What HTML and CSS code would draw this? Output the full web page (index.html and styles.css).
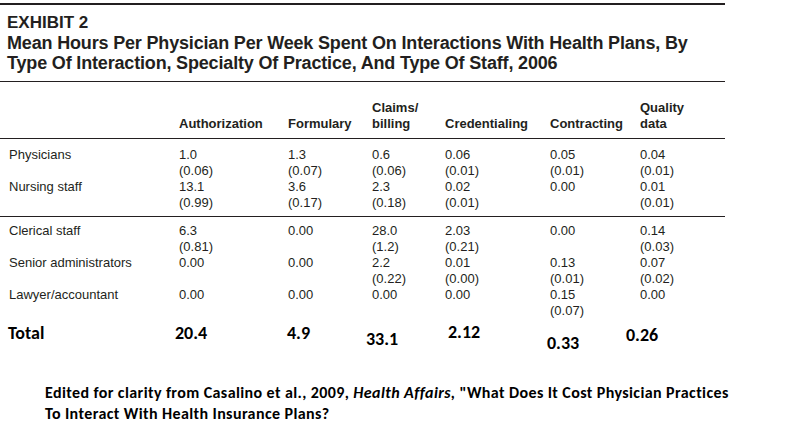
FILE: index.html
```html
<!DOCTYPE html>
<html lang="en">
<head>
<meta charset="utf-8">
<title>Exhibit 2</title>
<link rel="stylesheet" href="styles.css">
</head>
<body>
<div class="page">
  <section class="exhibit">
    <header class="exhibit-head">
      <div class="exhibit-label">EXHIBIT 2</div>
      <h1 class="exhibit-title">Mean Hours Per Physician Per Week Spent On Interactions With Health Plans, By<br>Type Of Interaction, Specialty Of Practice, And Type Of Staff, 2006</h1>
    </header>

    <div class="grid head-row">
      <div></div>
      <div>Authorization</div>
      <div>Formulary</div>
      <div>Claims/<br>billing</div>
      <div>Credentialing</div>
      <div>Contracting</div>
      <div>Quality<br>data</div>
    </div>

    <div class="grid group group-first">
      <div>Physicians</div>
      <div>1.0<br>(0.06)</div>
      <div>1.3<br>(0.07)</div>
      <div>0.6<br>(0.06)</div>
      <div>0.06<br>(0.01)</div>
      <div>0.05<br>(0.01)</div>
      <div>0.04<br>(0.01)</div>

      <div>Nursing staff</div>
      <div>13.1<br>(0.99)</div>
      <div>3.6<br>(0.17)</div>
      <div>2.3<br>(0.18)</div>
      <div>0.02<br>(0.01)</div>
      <div>0.00</div>
      <div>0.01<br>(0.01)</div>
    </div>

    <div class="grid group group-second">
      <div>Clerical staff</div>
      <div>6.3<br>(0.81)</div>
      <div>0.00</div>
      <div>28.0<br>(1.2)</div>
      <div>2.03<br>(0.21)</div>
      <div>0.00</div>
      <div>0.14<br>(0.03)</div>

      <div>Senior administrators</div>
      <div>0.00</div>
      <div>0.00</div>
      <div>2.2<br>(0.22)</div>
      <div>0.01<br>(0.00)</div>
      <div>0.13<br>(0.01)</div>
      <div>0.07<br>(0.02)</div>

      <div>Lawyer/accountant</div>
      <div>0.00</div>
      <div>0.00</div>
      <div>0.00</div>
      <div>0.00</div>
      <div>0.15<br>(0.07)</div>
      <div>0.00</div>
    </div>
  </section>

  <div class="grid total-row">
    <div class="t-label">Total</div>
    <div class="t-auth">20.4</div>
    <div class="t-form">4.9</div>
    <div class="t-claims">33.1</div>
    <div class="t-cred">2.12</div>
    <div class="t-contr">0.33</div>
    <div class="t-qual">0.26</div>
  </div>

  <p class="source">Edited for clarity from Casalino et al., 2009, <em>Health Affairs,</em> "What Does It Cost Physician Practices<br>To Interact With Health Insurance Plans?</p>
</div>
</body>
</html>
```

FILE: styles.css
```css
* {
  box-sizing: border-box;
}

html, body {
  margin: 0;
  padding: 0;
  background: #ffffff;
}

.page {
  width: 789px;
  height: 442px;
  padding-top: 3px;
  color: #231f20;
  font-family: "Liberation Sans", Arial, sans-serif;
}

.exhibit {
  width: 725px;
  border-top: 2px solid #231f20;
}

.exhibit-head {
  padding: 8px 0 8px 7px;
  border-bottom: 1px solid #231f20;
}

.exhibit-label,
.exhibit-title {
  margin: 0;
  font-size: 17px;
  line-height: 20px;
  font-weight: 700;
}

.exhibit-title {
  font-size: 18px;
  letter-spacing: -0.17px;
}

.grid {
  display: grid;
  grid-template-columns: 170px 109px 84px 73px 105px 90px 85px;
  padding-left: 9px;
}

.head-row {
  padding-top: 18px;
  padding-bottom: 6px;
  font-size: 13px;
  line-height: 16px;
  font-weight: 700;
  align-items: end;
  border-bottom: 1px solid #231f20;
}

.group {
  font-size: 13px;
  line-height: 16px;
  grid-auto-rows: 32px;
}

.group-first {
  padding-top: 8px;
  padding-bottom: 5px;
}

.group-second {
  padding-top: 6px;
  border-top: 1px solid #231f20;
}

.total-row {
  padding-top: 4px;
  padding-left: 8px;
  align-items: start;
  color: #000000;
  font-family: Carlito, Lato, sans-serif;
  font-size: 18px;
  line-height: 20px;
  font-weight: 700;
}

.t-auth { margin-left: -3px; }
.t-form { margin-left: 0; }
.t-claims { margin-left: -5px; margin-top: 6px; }
.t-cred { margin-left: 4px; margin-top: -1px; }
.t-contr { margin-left: -2px; margin-top: 10px; }
.t-qual { margin-left: -13px; margin-top: 2px; }

.source {
  margin: 29px 0 0 45px;
  color: #000000;
  font-family: Carlito, Lato, sans-serif;
  font-size: 16px;
  line-height: 21px;
  font-weight: 700;
  letter-spacing: 0.4px;
}

.source em {
  font-style: italic;
}
```
